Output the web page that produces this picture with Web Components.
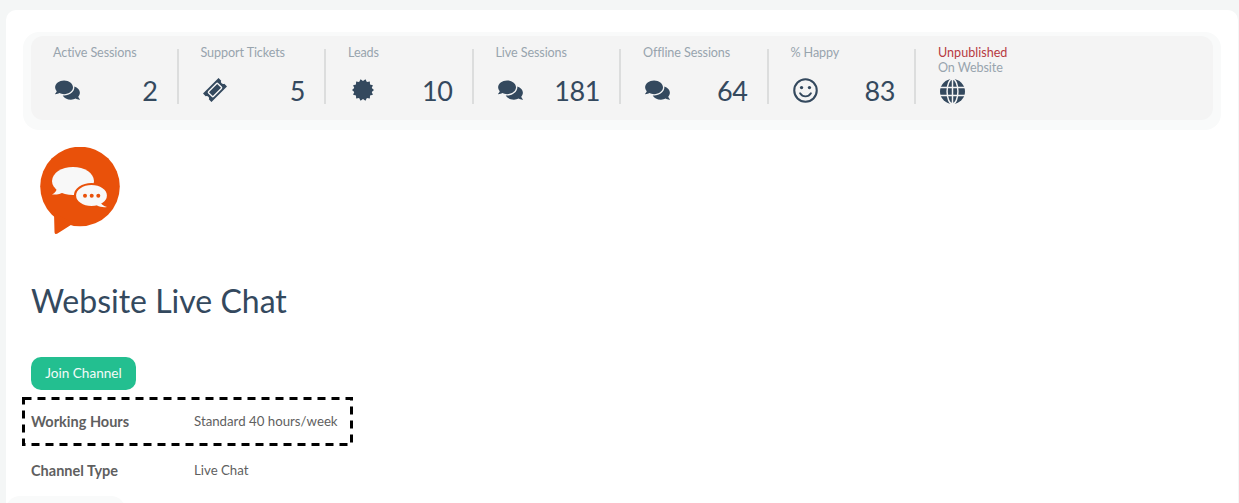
<!DOCTYPE html>
<html>
<head>
<meta charset="utf-8">
<title>Website Live Chat</title>
<style>
  html, body { margin: 0; height: 100%; overflow: hidden; background: #f4f6f6; }
  body { font-family: "Lato", "Liberation Sans", sans-serif; color: #34495e; }
  h1 {
    margin: 46px 0 36px 8px;
    font: 400 32px/40px "Lato", "Liberation Sans", sans-serif;
    color: #34495e;
  }
  join-button { margin-left: 8px; }
</style>
</head>
<body>
<channel-page>
  <stat-bar>
    <stat-item label="Active Sessions" value="2" icon="comments"></stat-item>
    <stat-item label="Support Tickets" value="5" icon="ticket"></stat-item>
    <stat-item label="Leads" value="10" icon="certificate"></stat-item>
    <stat-item label="Live Sessions" value="181" icon="comments"></stat-item>
    <stat-item label="Offline Sessions" value="64" icon="comments"></stat-item>
    <stat-item label="% Happy" value="83" icon="smile"></stat-item>
    <stat-item label="On Website" status="Unpublished" icon="globe" last></stat-item>
  </stat-bar>
  <chat-logo></chat-logo>
  <h1>Website Live Chat</h1>
  <join-button>Join Channel</join-button>
  <info-row label="Working Hours" value="Standard 40 hours/week" marked></info-row>
  <info-row label="Channel Type" value="Live Chat"></info-row>
</channel-page>

<script>
var ICONS = {
  comments: '<svg viewBox="0 0 576 512" width="25" height="22"><path fill="currentColor" d="M416 192c0-88.4-93.1-160-208-160S0 103.6 0 192c0 34.3 14.1 65.9 38 92-13.4 30.2-35.5 54.2-35.8 54.5-2.2 2.3-2.8 5.7-1.5 8.7S4.8 352 8 352c36.6 0 66.9-12.3 88.7-25 32.2 15.7 70.3 25 111.3 25 114.9 0 208-71.6 208-160zm122 220c23.9-26 38-57.7 38-92 0-66.9-53.5-124.2-129.3-148.1.9 6.6 1.3 13.3 1.3 20.1 0 105.9-107.7 192-240 192-10.8 0-21.3-.8-31.7-1.9C207.8 439.6 281.8 480 368 480c41 0 79.1-9.2 111.3-25 21.8 12.7 52.1 25 88.7 25 3.2 0 6.1-1.9 7.3-4.8 1.3-2.9.7-6.3-1.5-8.7-.3-.3-22.4-24.2-35.8-54.5z"/></svg>',
  ticket: '<svg viewBox="0 0 24 24" width="24" height="24"><g transform="rotate(-45 12 12)"><path fill="currentColor" d="M1 6h22v3.8a2.3 2.3 0 0 0 0 4.4V18H1v-3.8a2.3 2.3 0 0 0 0-4.4z"/><rect x="5.5" y="8.6" width="13" height="6.8" rx="1" fill="none" stroke="#f4f4f4" stroke-width="1.4"/></g></svg>',
  certificate: '<svg viewBox="-12 -12 24 24" width="22" height="22"><polygon fill="currentColor" points="' + starPoints() + '"/></svg>',
  smile: '<svg viewBox="0 0 24 24" width="25" height="25"><circle cx="12" cy="12" r="10.8" fill="none" stroke="currentColor" stroke-width="2"/><circle cx="8.2" cy="9.2" r="1.6" fill="currentColor"/><circle cx="15.8" cy="9.2" r="1.6" fill="currentColor"/><path d="M6.8 14.6c1.2 2 3.1 3 5.2 3s4-1 5.2-3" fill="none" stroke="currentColor" stroke-width="1.8" stroke-linecap="round"/></svg>',
  globe: '<svg viewBox="0 0 24 24" width="25" height="25"><circle cx="12" cy="12" r="12" fill="currentColor"/><g fill="none" stroke="#f4f4f4" stroke-width="1.4"><ellipse cx="12" cy="12" rx="5.2" ry="12"/><path d="M12 0v24M0 8.2h24M0 15.8h24"/></g></svg>'
};

function starPoints() {
  var pts = [];
  for (var i = 0; i < 28; i++) {
    var r = i % 2 ? 9.8 : 12;
    var a = Math.PI * i / 14;
    pts.push((r * Math.cos(a)).toFixed(2) + ',' + (r * Math.sin(a)).toFixed(2));
  }
  return pts.join(' ');
}

class ChannelPage extends HTMLElement {
  constructor() {
    super();
    this.attachShadow({ mode: 'open' });
    this.shadowRoot.innerHTML = `
      <style>
        :host {
          display: block;
          margin: 10px 1px 0 6px;
          padding: 22px 17px 0;
          background: #fff;
          border-radius: 10px 10px 0 0;
          height: calc(100vh - 10px);
          box-sizing: border-box;
          overflow: hidden;
        }
        .tail {
          width: 119px;
          height: 40px;
          margin: 1px 0 0 -17px;
          background: #f9fafa;
          border-radius: 14px;
        }
      </style>
      <slot></slot>
      <div class="tail"></div>
    `;
  }
}

class StatBar extends HTMLElement {
  constructor() {
    super();
    this.attachShadow({ mode: 'open' });
    this.shadowRoot.innerHTML = `
      <style>
        :host {
          display: block;
          padding: 4px 8px 10px;
          background: #f9fafa;
          border-radius: 16px;
        }
        .bar {
          display: grid;
          grid-template-columns: repeat(7, 147.5px);
          height: 84px;
          padding-top: 13px;
          box-sizing: border-box;
          background: #f4f4f4;
          border-radius: 12px;
        }
      </style>
      <div class="bar"><slot></slot></div>
    `;
  }
}

class StatItem extends HTMLElement {
  constructor() {
    super();
    this.attachShadow({ mode: 'open' });
    var status = this.getAttribute('status');
    var value = this.getAttribute('value') || '';
    this.shadowRoot.innerHTML = `
      <style>
        :host {
          display: block;
          height: 55px;
          box-sizing: border-box;
          padding: 0 19px 0 22px;
          border-right: 2px solid #dcdddd;
          color: #34495e;
        }
        :host([last]) { border-right: 0; }
        .label, .status {
          font-size: 12.6px;
          letter-spacing: -0.1px;
          line-height: 15px;
          color: #98a4ae;
          white-space: nowrap;
          height: 15px;
          margin-top: -4px;
        }
        .status { color: #b73a42; letter-spacing: 0; }
        :host([status]) .label { margin-top: 0; }
        .row {
          display: flex;
          justify-content: space-between;
          align-items: center;
          height: 30px;
          margin-top: 15px;
        }
        :host([status]) .row { margin-top: 1px; }
        .icon { display: flex; width: 26px; justify-content: center; margin-left: 1.5px; }
        .value { font-size: 27px; line-height: 30px; letter-spacing: -0.4px; padding-top: 2px; }
      </style>
      ${status ? '<div class="status">' + status + '</div>' : ''}
      <div class="label">${this.getAttribute('label')}</div>
      <div class="row">
        <span class="icon">${ICONS[this.getAttribute('icon')]}</span>
        <span class="value">${value}</span>
      </div>
    `;
  }
}

class ChatLogo extends HTMLElement {
  constructor() {
    super();
    this.attachShadow({ mode: 'open' });
    this.shadowRoot.innerHTML = `
      <style>
        :host { display: block; height: 88px; margin: 17px 0 0 17px; }
        svg { display: block; }
      </style>
      <svg viewBox="0 0 80 88" width="80" height="88">
        <circle cx="40" cy="39.5" r="39.8" fill="#e9510a"/>
        <path fill="#e9510a" d="M14 66l.5 19c0 1.8 1.4 2.6 3 1.6L34 76z"/>
        <ellipse cx="33" cy="34" rx="21" ry="14" fill="#f8f8f8"/>
        <path fill="#f8f8f8" d="M17 41c0 2-2 5-5 6.5 4 .4 9-.5 12-2.5z"/>
        <ellipse cx="51.5" cy="48.5" rx="16.5" ry="11.5" fill="#f8f8f8" stroke="#e9510a" stroke-width="2.2"/>
        <path fill="#f8f8f8" d="M60 55c1 2 4 4.500 7 5-3.500.6-7 0-10-1.500z"/>
        <circle cx="45" cy="48.7" r="2" fill="#e9510a"/><circle cx="51.7" cy="48.7" r="2" fill="#e9510a"/><circle cx="58.3" cy="48.7" r="2" fill="#e9510a"/>
      </svg>
    `;
  }
}

class JoinButton extends HTMLElement {
  constructor() {
    super();
    this.attachShadow({ mode: 'open' });
    this.shadowRoot.innerHTML = `
      <style>
        :host { display: block; margin-bottom: 7px; }
        button {
          display: block;
          width: 105px;
          height: 33px;
          padding: 0 0 1px;
          border: 0;
          border-radius: 10px;
          background: #23bf90;
          color: #f2fbf8;
          font: 13.6px "Lato", "Liberation Sans", sans-serif;
        }
      </style>
      <button><slot></slot></button>
    `;
  }
}

class InfoRow extends HTMLElement {
  constructor() {
    super();
    this.attachShadow({ mode: 'open' });
    var marked = this.hasAttribute('marked');
    this.shadowRoot.innerHTML = `
      <style>
        :host {
          display: flex;
          position: relative;
          align-items: center;
          width: 331px;
          height: 49px;
          box-sizing: border-box;
          margin-left: -1px;
          padding-left: 9px;
          white-space: nowrap;
          color: #5f5f5f;
        }
        .label { width: 163px; font-size: 14.5px; font-weight: 700; }
        .value { font-size: 13.25px; margin-top: -1px; }
        svg { position: absolute; left: 0; top: 0; }
      </style>
      <span class="label">${this.getAttribute('label')}</span>
      <span class="value">${this.getAttribute('value')}</span>
      ${marked ? '<svg width="331" height="49"><rect x="1.5" y="1.5" width="328" height="46" fill="none" stroke="#000" stroke-width="3" stroke-dasharray="8 6"/></svg>' : ''}
    `;
  }
}

customElements.define('channel-page', ChannelPage);
customElements.define('stat-bar', StatBar);
customElements.define('stat-item', StatItem);
customElements.define('chat-logo', ChatLogo);
customElements.define('join-button', JoinButton);
customElements.define('info-row', InfoRow);
</script>
</body>
</html>
